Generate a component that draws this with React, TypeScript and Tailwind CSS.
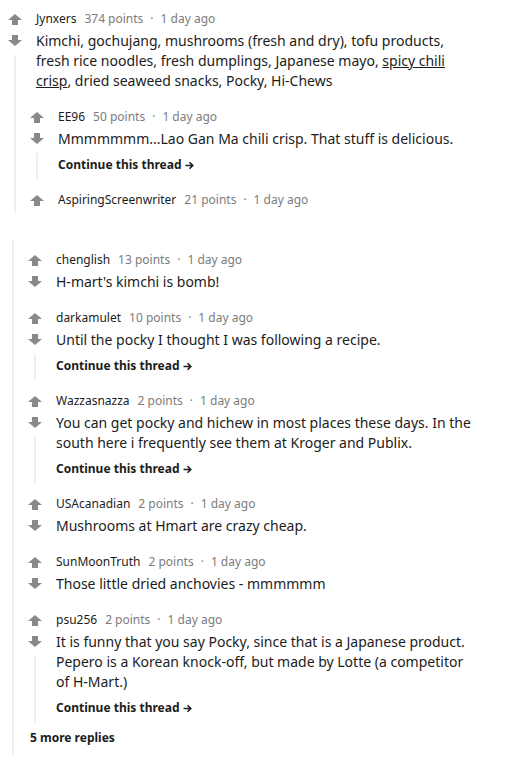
import type { ReactNode } from 'react';

type Reply = {
  user: string;
  points: string;
  body?: ReactNode;
  cont?: boolean;
  replies?: Reply[];
};

const firstThread: Reply = {
  user: 'Jynxers',
  points: '374 points',
  body: (
    <>
      Kimchi, gochujang, mushrooms (fresh and dry), tofu products, fresh rice noodles, fresh dumplings, Japanese mayo,{' '}
      <span className="underline">spicy chili</span> <span className="underline">crisp</span>, dried seaweed snacks, Pocky,
      Hi-Chews
    </>
  ),
  replies: [
    {
      user: 'EE96',
      points: '50 points',
      body: 'Mmmmmmm...Lao Gan Ma chili crisp. That stuff is delicious.',
      cont: true,
    },
    { user: 'AspiringScreenwriter', points: '21 points' },
  ],
};

const secondThread: Reply[] = [
  { user: 'chenglish', points: '13 points', body: "H-mart's kimchi is bomb!" },
  { user: 'darkamulet', points: '10 points', body: 'Until the pocky I thought I was following a recipe.', cont: true },
  {
    user: 'Wazzasnazza',
    points: '2 points',
    body: 'You can get pocky and hichew in most places these days. In the south here i frequently see them at Kroger and Publix.',
    cont: true,
  },
  { user: 'USAcanadian', points: '2 points', body: 'Mushrooms at Hmart are crazy cheap.' },
  { user: 'SunMoonTruth', points: '2 points', body: 'Those little dried anchovies - mmmmmm' },
  {
    user: 'psu256',
    points: '2 points',
    body: 'It is funny that you say Pocky, since that is a Japanese product. Pepero is a Korean knock-off, but made by Lotte (a competitor of H-Mart.)',
    cont: true,
  },
];

function UpArrow() {
  return (
    <div className="h-[16px] w-[16px] flex items-center justify-center">
      <svg width="14" height="11" viewBox="0 0 14 11">
        <polygon points="7,0 14,6 10,6 10,11 4,11 4,6 0,6" fill="#878a8c" />
      </svg>
    </div>
  );
}

function DownArrow() {
  return (
    <div className="mt-[5px] h-[16px] w-[16px] flex items-center justify-center">
      <svg width="14" height="11" viewBox="0 0 14 11">
        <polygon points="7,11 14,5 10,5 10,0 4,0 4,5 0,5" fill="#878a8c" />
      </svg>
    </div>
  );
}

function Comment({ c, first }: { c: Reply; first?: boolean }) {
  return (
    <div className={`flex ${first ? 'pt-[11px]' : 'pt-[13px]'}`}>
      <div className="w-[22px] shrink-0 flex flex-col items-center">
        <UpArrow />
        {c.body && <DownArrow />}
        {c.body && <div className="mt-[7px] w-[2px] flex-1 bg-[#edeff1]" />}
      </div>
      <div className="flex-1 min-w-0">
        <div className={`pl-[10px] ${c.cont ? 'pb-[6px]' : 'pb-[5px]'}`}>
          <div className="text-[12px] leading-[16px] whitespace-nowrap">
            <span className="text-[#1c1c1c]">{c.user}</span>
            <span className="ml-[8px] text-[#7c7c7c]">{c.points}</span>
            <span className="mx-[7px] text-[#7c7c7c]">·</span>
            <span className="text-[#7c7c7c]">1 day ago</span>
          </div>
          {c.body && (
            <div className="mt-[4px] text-[14px] leading-[20px] text-[#1c1c1c]">{c.body}</div>
          )}
          {c.cont && (
            <div className="mt-[8px] flex items-center text-[12px] leading-[16px] font-bold text-[#1c1c1c]">
              Continue this thread
              <svg className="ml-[3px]" width="9" height="9" viewBox="0 0 9 9">
                <path d="M0.5 4.5H7.5M4.5 1.2L7.8 4.5L4.5 7.8" stroke="#1c1c1c" strokeWidth="1.6" fill="none" />
              </svg>
            </div>
          )}
        </div>
        {c.replies?.map((r) => <Comment key={r.user} c={r} />)}
      </div>
    </div>
  );
}

export default function App() {
  return (
    <div className="min-h-[763px] bg-white pr-[55px] font-['Noto_Sans',sans-serif]">
      <div className="pl-[4px]">
        <Comment c={firstThread} first />
      </div>
      <div className="mt-[24px] pl-[2px] flex pt-[2px]">
        <div className="w-[22px] shrink-0 flex justify-center">
          <div className="w-[2px] bg-[#edeff1]" />
        </div>
        <div className="flex-1 min-w-0">
          {secondThread.map((r) => (
            <Comment key={r.user} c={r} />
          ))}
          <div className="mt-[8px] pb-[8px] pl-[6px] text-[12px] leading-[16px] font-bold text-[#1c1c1c]">
            5 more replies
          </div>
        </div>
      </div>
    </div>
  );
}
